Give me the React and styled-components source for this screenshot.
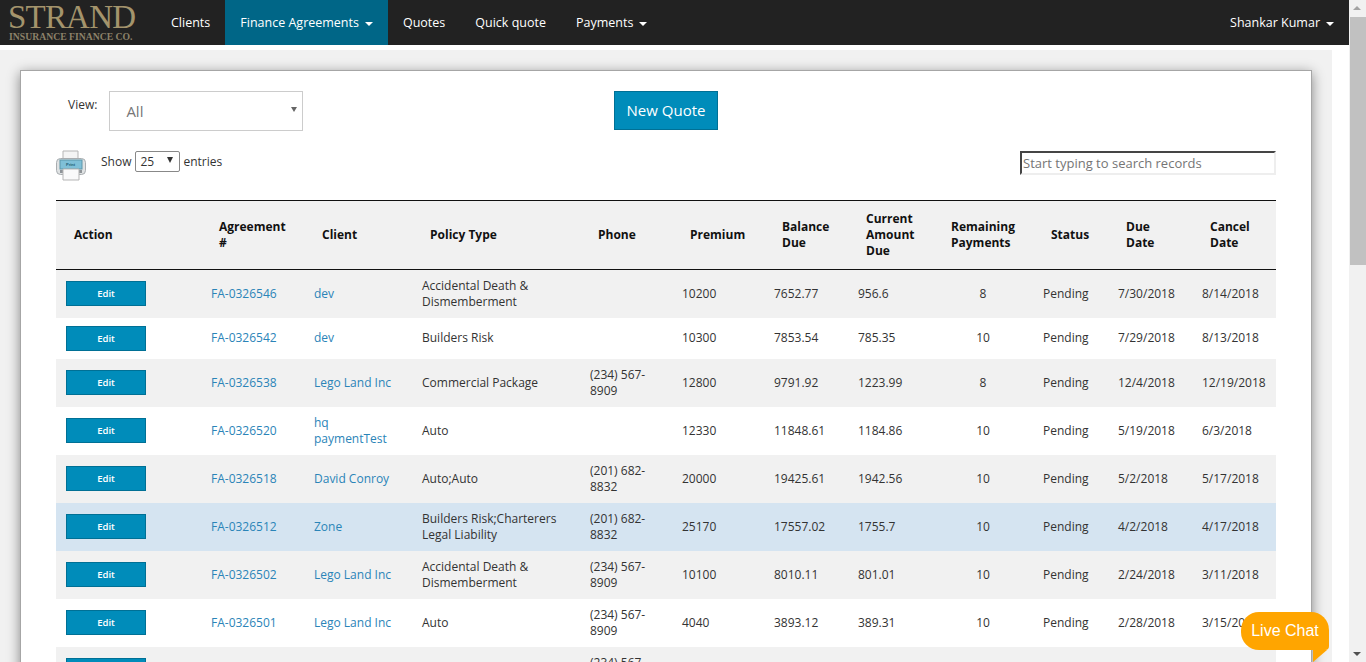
import React from 'react'
import styled, { createGlobalStyle } from 'styled-components'

const GlobalStyle = createGlobalStyle`
  html, body {
    height: 100%;
    margin: 0;
    overflow: hidden;
  }
  body {
    background: #fff;
    color: #333;
    font-family: "Open Sans", sans-serif;
    font-size: 12px;
  }
  * { box-sizing: border-box; }
`

const Shell = styled.div`
  display: flex;
  height: 100vh;
  overflow: hidden;
`
const Viewport = styled.div`
  flex: 1;
  min-width: 0;
  overflow: hidden;
`
const Navbar = styled.nav`
  background: #222;
  display: flex;
  height: 45px;
`
const Logo = styled.a`
  display: flex;
  flex-direction: column;
  padding: 2px 0 0 8px;
  width: 156px;
  font-family: "Liberation Serif", serif;
`
const LogoName = styled.span`
  color: #a4946c;
  font-size: 33px;
  letter-spacing: -0.8px;
  line-height: 30px;
`
const LogoSub = styled.span`
  color: #8c8169;
  font-size: 9.7px;
  font-weight: 700;
  letter-spacing: 0;
  line-height: 9px;
  margin-left: 1px;
  white-space: nowrap;
`
const NavItem = styled.a`
  align-items: center;
  background: ${p => (p.$active ? '#006687' : 'transparent')};
  color: #fff;
  display: flex;
  font-size: 12.5px;
  padding: 0 15px;
  margin-left: ${p => (p.$right ? 'auto' : '0')};
  white-space: nowrap;
`
const Caret = styled.span`
  border-left: 4px solid transparent;
  border-right: 4px solid transparent;
  border-top: 4px solid #fff;
  margin-left: 6px;
  margin-top: 2px;
`
const Content = styled.main`
  background: #f1f1f1;
  margin: 5px 17px 0 0;
  padding: 20px 20px 0;
  height: calc(100vh - 50px);
  overflow: hidden;
`
const Card = styled.section`
  background: #fff;
  border: 1px solid #a6a6a6;
  box-shadow: 0 3px 12px rgba(0, 0, 0, 0.45);
  padding: 20px 35px 40px;
  height: 700px;
`
const TopRow = styled.div`
  display: grid;
  grid-template-columns: 1fr auto 1fr;
  height: 59px;
`
const ViewGroup = styled.div`
  display: flex;
  gap: 12px;
  padding-left: 12px;
`
const ViewLabel = styled.label`
  line-height: 16px;
  padding-top: 6px;
  color: #333;
`
const SelectWrap = styled.div`
  margin-left: ${p => (p.$small ? '1px' : '0')};
  position: relative;
  &::after {
    content: '';
    position: absolute;
    right: ${p => (p.$small ? '7px' : '6px')};
    top: ${p => (p.$small ? '6px' : '16px')};
    border-left: ${p => (p.$small ? '3.5px' : '3px')} solid transparent;
    border-right: ${p => (p.$small ? '3.5px' : '3px')} solid transparent;
    border-top: ${p => (p.$small ? '6px solid #333' : '5px solid #666')};
    pointer-events: none;
  }
`
const ViewSelect = styled.select`
  appearance: none;
  background: #fff;
  border: 1px solid #ccc;
  border-radius: 0;
  color: #777;
  font-family: inherit;
  font-size: 15px;
  height: 40px;
  padding: 0 16px;
  width: 194px;
`
const NewQuote = styled.button`
  background: #008cba;
  border: 1px solid #007095;
  color: #fff;
  font-family: inherit;
  font-size: 15px;
  height: 39px;
  padding: 0 0 2px;
  width: 104px;
`
const ToolRow = styled.div`
  align-items: flex-start;
  display: flex;
  height: 50px;
`
const PrintIcon = styled.svg`
  display: block;
  margin-right: 15px;
  flex: none;
`
const PrintLabel = styled.text`
  fill: #1d5d75;
  font-family: "Liberation Sans", sans-serif;
  font-size: 4px;
  font-weight: 700;
`
const LengthGroup = styled.div`
  align-items: center;
  display: flex;
  gap: 3px;
  height: 21px;
  margin-top: 1px;
`
const LengthSelect = styled.select`
  appearance: none;
  background: #fff;
  border: 1px solid #888;
  border-radius: 2px;
  color: #333;
  display: block;
  font-family: inherit;
  font-size: 12px;
  height: 21px;
  padding: 0 4px;
  width: 45px;
`
const SearchInput = styled.input`
  border: 2px inset #eee;
  border-color: #999 #eee #eee #999;
  font-family: inherit;
  font-size: 13px;
  height: 24px;
  margin-left: auto;
  margin-top: 1px;
  padding: 0 1px;
  width: 256px;
  &::placeholder { color: #757575; opacity: 1; }
`
const Table = styled.table`
  border-collapse: separate;
  border-spacing: 0;
  table-layout: fixed;
  width: 1220px;
`
const Head = styled.th`
  background: #f1f1f1;
  border-bottom: 1px solid #111;
  border-top: 1px solid #111;
  color: #111;
  font-size: 12px;
  font-weight: 700;
  height: 70px;
  line-height: 16px;
  padding: 0 16px 0 18px;
  text-align: left;
`
const Row = styled.tr`
  background: ${p => (p.$selected ? '#d5e4f1' : p.$odd ? '#f1f1f1' : '#fff')};
`
const Cell = styled.td`
  line-height: 16px;
  padding: ${p => (p.$short ? '7px 10px 9px' : '8px 10px')};
  text-align: ${p => (p.$center ? 'center' : 'left')};
  color: #333;
  vertical-align: middle;
`
const Link = styled.a`
  color: #2a84b8;
`
const EditButton = styled.button`
  background: #008cba;
  border: 1px solid #007095;
  color: #fff;
  display: block;
  font-family: inherit;
  font-size: 9.5px;
  font-weight: 600;
  height: 25px;
  margin-top: ${p => (p.$lift ? '-1px' : '0')};
  padding: 0;
  width: 80px;
`
const ScrollTrack = styled.div`
  background: #f1f1f1;
  display: flex;
  flex: none;
  flex-direction: column;
  height: 100vh;
  justify-content: space-between;
  position: relative;
  width: 17px;
`
const ScrollArrow = styled.span`
  border-left: 4px solid transparent;
  border-right: 4px solid transparent;
  ${p => (p.$up ? 'border-bottom: 4px solid #a3a3a3; margin: 6px 0 0 4px;' : 'border-top: 4px solid #505050; margin: 0 0 6px 4px;')}
  width: 0;
`
const ScrollThumb = styled.div`
  background: #c1c1c1;
  height: 248px;
  left: 1px;
  position: absolute;
  right: 0;
  top: 17px;
`
const LiveChat = styled.div`
  background: #ffa500;
  border-radius: 18px 18px 4px 18px;
  color: #fff;
  font-family: "Liberation Sans", sans-serif;
  font-size: 16px;
  height: 38px;
  left: 1241px;
  line-height: 37px;
  position: fixed;
  text-align: center;
  top: 612px;
  width: 88px;
  &::after {
    content: '';
    position: absolute;
    right: 2px;
    top: 38px;
    border-top: 12px solid #ffa500;
    border-right: 14px solid transparent;
  }
`

const columns = [
  { label: 'Action', width: 145 },
  { label: 'Agreement #', width: 103 },
  { label: 'Client', width: 108 },
  { label: 'Policy Type', width: 168 },
  { label: 'Phone', width: 92 },
  { label: 'Premium', width: 92 },
  { label: 'Balance Due', width: 84 },
  { label: 'Current Amount Due', width: 85 },
  { label: 'Remaining Payments', width: 100 },
  { label: 'Status', width: 75 },
  { label: 'Due Date', width: 84 },
  { label: 'Cancel Date', width: 84 }
]

const rows = [
  ['FA-0326546', 'dev', 'Accidental Death & Dismemberment', '', '10200', '7652.77', '956.6', '8', 'Pending', '7/30/2018', '8/14/2018'],
  ['FA-0326542', 'dev', 'Builders Risk', '', '10300', '7853.54', '785.35', '10', 'Pending', '7/29/2018', '8/13/2018'],
  ['FA-0326538', 'Lego Land Inc', 'Commercial Package', '(234) 567-8909', '12800', '9791.92', '1223.99', '8', 'Pending', '12/4/2018', '12/19/2018'],
  ['FA-0326520', 'hq paymentTest', 'Auto', '', '12330', '11848.61', '1184.86', '10', 'Pending', '5/19/2018', '6/3/2018'],
  ['FA-0326518', 'David Conroy', 'Auto;Auto', '(201) 682-8832', '20000', '19425.61', '1942.56', '10', 'Pending', '5/2/2018', '5/17/2018'],
  ['FA-0326512', 'Zone', 'Builders Risk;Charterers Legal Liability', '(201) 682-8832', '25170', '17557.02', '1755.7', '10', 'Pending', '4/2/2018', '4/17/2018'],
  ['FA-0326502', 'Lego Land Inc', 'Accidental Death & Dismemberment', '(234) 567-8909', '10100', '8010.11', '801.01', '10', 'Pending', '2/24/2018', '3/11/2018'],
  ['FA-0326501', 'Lego Land Inc', 'Auto', '(234) 567-8909', '4040', '3893.12', '389.31', '10', 'Pending', '2/28/2018', '3/15/2018'],
  ['', '', '', '(234) 567-8909', '', '', '', '', '', '', '']
]

const Printer = () => (
  <PrintIcon width="30" height="31" viewBox="0 0 30 31">
    <path d="M7 1h15v10H7z" fill="#f4f4f4" stroke="#b5b5b5" />
    <rect x="0.5" y="8.5" width="29" height="16" rx="4" fill="#dfe2e3" stroke="#a9adb0" />
    <rect x="4" y="10" width="22" height="9" fill="#7fc0d8" stroke="#5c96aa" />
    <PrintLabel x="10" y="15.5">Print</PrintLabel>
    <path d="M4 20h22v3H4z" fill="#8f9498" />
    <path d="M7 19h16v11H7z" fill="#fafafa" stroke="#b5b5b5" />
  </PrintIcon>
)

const App = () => (
  <Shell>
    <GlobalStyle />
    <Viewport>
      <Navbar>
        <Logo>
          <LogoName>STRAND</LogoName>
          <LogoSub>INSURANCE FINANCE CO.</LogoSub>
        </Logo>
        <NavItem>Clients</NavItem>
        <NavItem $active>Finance Agreements <Caret /></NavItem>
        <NavItem>Quotes</NavItem>
        <NavItem>Quick quote</NavItem>
        <NavItem>Payments <Caret /></NavItem>
        <NavItem $right>Shankar Kumar <Caret /></NavItem>
      </Navbar>
      <Content>
        <Card>
          <TopRow>
            <ViewGroup>
              <ViewLabel>View:</ViewLabel>
              <SelectWrap>
                <ViewSelect defaultValue="All">
                  <option>All</option>
                </ViewSelect>
              </SelectWrap>
            </ViewGroup>
            <NewQuote>New Quote</NewQuote>
            <div />
          </TopRow>
          <ToolRow>
            <Printer />
            <LengthGroup>
              <span>Show</span>
              <SelectWrap $small>
                <LengthSelect defaultValue="25">
                  <option>25</option>
                </LengthSelect>
              </SelectWrap>
              <span>entries</span>
            </LengthGroup>
            <SearchInput placeholder="Start typing to search records" />
          </ToolRow>
          <Table>
            <colgroup>
              {columns.map(c => <col key={c.label} style={{ width: c.width }} />)}
            </colgroup>
            <thead>
              <tr>
                {columns.map(c => <Head key={c.label}>{c.label}</Head>)}
              </tr>
            </thead>
            <tbody>
              {rows.map((r, i) => (
                <Row key={i} $odd={i % 2 === 0} $selected={i === 5}>
                  <Cell><EditButton $lift={i !== 1}>Edit</EditButton></Cell>
                  {r.map((value, k) => (
                    <Cell key={k} $short={i === 1} $center={k === 7}>
                      {k < 2 ? <Link>{value}</Link> : value}
                    </Cell>
                  ))}
                </Row>
              ))}
            </tbody>
          </Table>
        </Card>
      </Content>
    </Viewport>
    <ScrollTrack>
      <ScrollArrow $up />
      <ScrollThumb />
      <ScrollArrow />
    </ScrollTrack>
    <LiveChat>Live Chat</LiveChat>
  </Shell>
)

export default App
